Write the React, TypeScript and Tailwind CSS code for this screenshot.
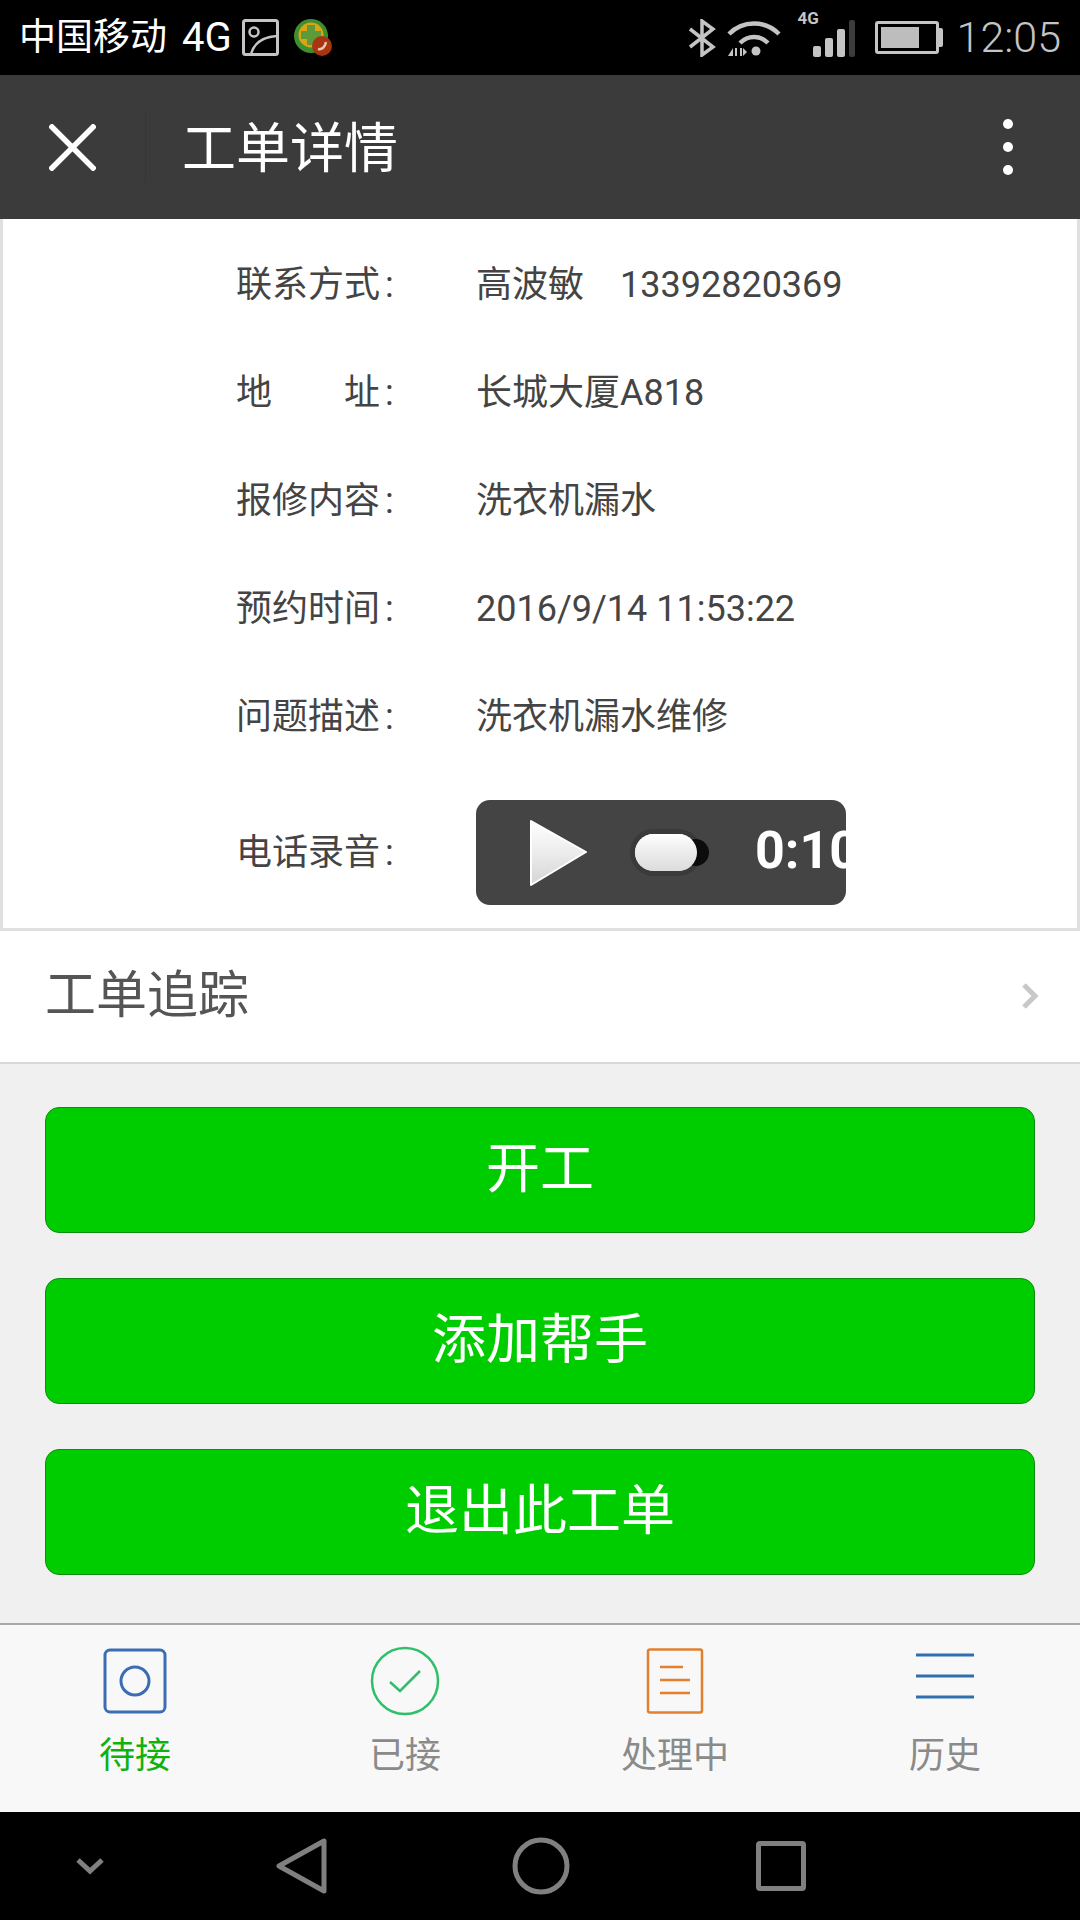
import React from 'react';

const font = "font-['Roboto','Noto_Sans_CJK_SC',sans-serif]";

const StatusBar = () => (
  <div className="flex h-[75px] items-center bg-black pl-[19px] pr-[19px]">
    <span className="text-[37px] leading-none text-white">中国移动</span>
    <span className="ml-[15px] text-[40px] leading-none text-white">4G</span>
    {/* image notification */}
    <svg className="ml-[10px]" width="37" height="37" viewBox="0 0 37 37" fill="none" stroke="#c4c4c4">
      <rect x="1.5" y="1.5" width="34" height="34" rx="2" strokeWidth="3" />
      <circle cx="12" cy="13" r="4.5" strokeWidth="2.5" />
      <path d="M9 35c3-11 11-17 26-18" strokeWidth="2.5" />
    </svg>
    {/* app notification */}
    <svg className="ml-[14px]" width="42" height="40" viewBox="0 0 42 40">
      <circle cx="18" cy="18" r="17" fill="#3f8f2f" />
      <circle cx="18" cy="17" r="12.5" fill="#d9a514" />
      <path d="M14 7h8v6h6v8h-6v6h-8v-6H8v-8h6z" fill="#5c9a3a" />
      <circle cx="29" cy="28" r="10" fill="#a83510" />
      <path d="M25 31c4 1 7-2 8-7" stroke="#e8c4b4" strokeWidth="2.5" fill="none" />
    </svg>
    <div className="ml-auto flex items-center">
      <svg width="28" height="38" viewBox="0 0 28 38" fill="none" stroke="#c4c4c4" strokeWidth="3.5">
        <path d="M2 10l23 18-11 8V2l11 8L2 28" />
      </svg>
      <svg className="ml-[11px]" width="55" height="38" viewBox="0 0 55 38" fill="none" stroke="#c4c4c4">
        <path d="M2 15C16 1 38 1 52 15" strokeWidth="4.5" />
        <path d="M13 24c8-8 20-8 28 0" strokeWidth="4.5" />
        <circle cx="29" cy="32" r="4.5" fill="#c4c4c4" stroke="none" />
        <path d="M1 37l5-8v8zM8 29h2v8H8zM13 29h2v8h-2zM16 29l4 4-4 4z" fill="#c4c4c4" stroke="none" />
      </svg>
      <div className="relative ml-[16px] flex h-[38px] w-[58px] items-end gap-[4px] pl-[15px]">
        <span className="absolute left-0 top-[-9px] text-[17px] font-bold leading-none text-[#c4c4c4]">4G</span>
        <i className="h-[11px] w-[8px] rounded-[2px] bg-[#c4c4c4]" />
        <i className="h-[19px] w-[8px] rounded-[2px] bg-[#c4c4c4]" />
        <i className="h-[28px] w-[8px] rounded-[2px] bg-[#c4c4c4]" />
        <i className="h-[37px] w-[6px] rounded-[2px] bg-[#3c3c3c]" />
      </div>
      <div className="ml-[19px] flex items-center">
        <div className="h-[33px] w-[64px] rounded-[3px] border-[3px] border-[#c4c4c4] p-[3px]">
          <div className="h-full w-[38px] bg-[#bdbdbd]" />
        </div>
        <div className="h-[19px] w-[4px] rounded-r-[2px] bg-[#c4c4c4]" />
      </div>
      <span className="ml-[14px] text-[43px] font-light leading-none text-[#c4c4c4]">12:05</span>
    </div>
  </div>
);

const Header = () => (
  <div className="flex h-[144px] items-center bg-[#3b3b3b]">
    <div className="flex h-[72px] w-[146px] items-center border-r border-[#353535] pl-[49px]">
      <svg width="47" height="47" viewBox="0 0 47 47" stroke="#fff" strokeWidth="5.5">
        <path d="M1 1l45 45M46 1L1 46" />
      </svg>
    </div>
    <h1 className="ml-[36px] pt-[6px] text-[54px] font-normal leading-none text-white">工单详情</h1>
    <div className="ml-auto mr-[67px] flex flex-col gap-[13px]">
      <i className="size-[10px] rounded-full bg-white" />
      <i className="size-[10px] rounded-full bg-white" />
      <i className="size-[10px] rounded-full bg-white" />
    </div>
  </div>
);

const rows = [
  { label: '联系方式', value: '高波敏　13392820369' },
  { label: '地　　址', value: '长城大厦A818' },
  { label: '报修内容', value: '洗衣机漏水' },
  { label: '预约时间', value: '2016/9/14 11:53:22' },
  { label: '问题描述', value: '洗衣机漏水维修' },
];

const AudioPlayer = () => (
  <div className="flex h-[105px] w-[370px] items-center overflow-hidden rounded-[14px] bg-[#444444] pl-[53px]">
    <svg className="shrink-0" width="58" height="66" viewBox="0 0 58 66">
      <defs>
        <linearGradient id="playFill" x1="0" y1="0" x2="0" y2="1">
          <stop offset="0" stopColor="#ffffff" />
          <stop offset="0.5" stopColor="#ececec" />
          <stop offset="1" stopColor="#d4d4d4" />
        </linearGradient>
      </defs>
      <path d="M2 1l55 31L2 65z" fill="url(#playFill)" stroke="#fff" strokeWidth="2" strokeLinejoin="round" />
    </svg>
    <div className="relative ml-[48px] h-[37px] w-[62px] shrink-0 rounded-full bg-gradient-to-b from-white via-[#ececec] to-[#dcdcdc] shadow-[0_0_0_5px_#3a3a3a]">
      <div className="absolute left-[47px] top-[5px] h-[27px] w-[27px] rounded-full bg-[#0c0c0c]" />
      <div className="absolute inset-0 rounded-full bg-gradient-to-b from-white via-[#ececec] to-[#dcdcdc]" />
    </div>
    <span className="ml-[58px] shrink-0 pb-[4px] text-[52px] font-bold leading-none text-white">0:10</span>
  </div>
);

const DetailPanel = () => (
  <div className="border-x-[3px] border-b-[3px] border-[#e0e0e0] bg-white pb-[23px] pt-[12px]">
    {rows.map((r) => (
      <div key={r.label} className="flex h-[108px] items-center text-[36px] leading-none text-[#444444]">
        <span className="w-[473px] shrink-0 pl-[233px]">
          {r.label}
          <span className="ml-[5px]">:</span>
        </span>
        <span>{r.value}</span>
      </div>
    ))}
    <div className="mt-[29px] flex items-center text-[36px] leading-none text-[#444444]">
      <span className="w-[473px] shrink-0 pl-[233px]">
        电话录音
        <span className="ml-[5px]">:</span>
      </span>
      <AudioPlayer />
    </div>
  </div>
);

const TrackRow = () => (
  <div className="flex h-[133px] items-center justify-between border-b-[2px] border-[#d8d8d8] bg-white pb-[2px] pl-[45px] pr-[40px]">
    <span className="text-[51px] leading-none text-[#555555]">工单追踪</span>
    <svg width="20" height="26" viewBox="0 0 20 26" fill="none" stroke="#c8c8c8" strokeWidth="5">
      <path d="M4 2l11 11L4 24" />
    </svg>
  </div>
);

const actions = ['开工', '添加帮手', '退出此工单'];

const ActionList = () => (
  <div className="flex flex-col gap-[45px] bg-[#f0f0f0] px-[45px] pb-[48px] pt-[43px]">
    {actions.map((a) => (
      <button
        key={a}
        className="flex h-[126px] items-center justify-center rounded-[14px] border border-[#0c900c] bg-[#00cd00] text-[54px] leading-none text-white"
      >
        {a}
      </button>
    ))}
  </div>
);

const tabs = [
  {
    label: '待接',
    color: 'text-[#0fb10f]',
    icon: (
      <svg width="64" height="66" viewBox="0 0 64 66" fill="none" stroke="#3b6db4" strokeWidth="3">
        <rect x="2" y="2" width="60" height="62" rx="5" />
        <circle cx="32" cy="33" r="14" />
      </svg>
    ),
  },
  {
    label: '已接',
    color: 'text-[#8a8a8a]',
    icon: (
      <svg width="70" height="70" viewBox="0 0 70 70" fill="none" stroke="#2fbf6b" strokeWidth="2.5">
        <circle cx="35" cy="35" r="33" />
        <path d="M20 36l10 9 20-20" />
      </svg>
    ),
  },
  {
    label: '处理中',
    color: 'text-[#8a8a8a]',
    icon: (
      <svg width="58" height="66" viewBox="0 0 58 66" fill="none" stroke="#e2802f" strokeWidth="2.5">
        <rect x="2" y="1.5" width="54" height="63" rx="2" />
        <path d="M14 19h23M14 32h30M14 45h30" />
      </svg>
    ),
  },
  {
    label: '历史',
    color: 'text-[#8a8a8a]',
    icon: (
      <svg width="60" height="60" viewBox="0 0 60 60" stroke="#2f6fb0" strokeWidth="3">
        <path d="M1 4h58M1 25h58M1 46h58" />
      </svg>
    ),
  },
];

const TabBar = () => (
  <div className="grid h-[189px] grid-cols-4 border-t-[2px] border-[#a8a8a8] bg-[#f8f8f8]">
    {tabs.map((t) => (
      <div key={t.label} className="flex flex-col items-center pt-[21px]">
        <div className="flex h-[70px] items-center justify-center">{t.icon}</div>
        <span className={`mt-[22px] text-[36px] leading-none ${t.color}`}>{t.label}</span>
      </div>
    ))}
  </div>
);

const NavBar = () => (
  <div className="relative flex h-[108px] items-center bg-black">
    <svg className="ml-[76px]" width="28" height="18" viewBox="0 0 28 18" fill="none" stroke="#808080" strokeWidth="5">
      <path d="M2 3l12 11L26 3" />
    </svg>
    <svg className="ml-[172px]" width="52" height="56" viewBox="0 0 52 56" fill="none" stroke="#808080" strokeWidth="5" strokeLinejoin="round">
      <path d="M3 28L48 3v50z" />
    </svg>
    <svg className="ml-[184px]" width="58" height="58" viewBox="0 0 58 58" fill="none" stroke="#808080" strokeWidth="5">
      <circle cx="29" cy="29" r="26" />
    </svg>
    <div className="ml-[186px] size-[50px] rounded-[4px] border-[5px] border-[#808080]" />
  </div>
);

export default function App() {
  return (
    <div className={`flex h-[1920px] w-[1080px] flex-col overflow-hidden bg-[#f0f0f0] ${font}`}>
      <StatusBar />
      <Header />
      <DetailPanel />
      <TrackRow />
      <ActionList />
      <TabBar />
      <NavBar />
    </div>
  );
}
